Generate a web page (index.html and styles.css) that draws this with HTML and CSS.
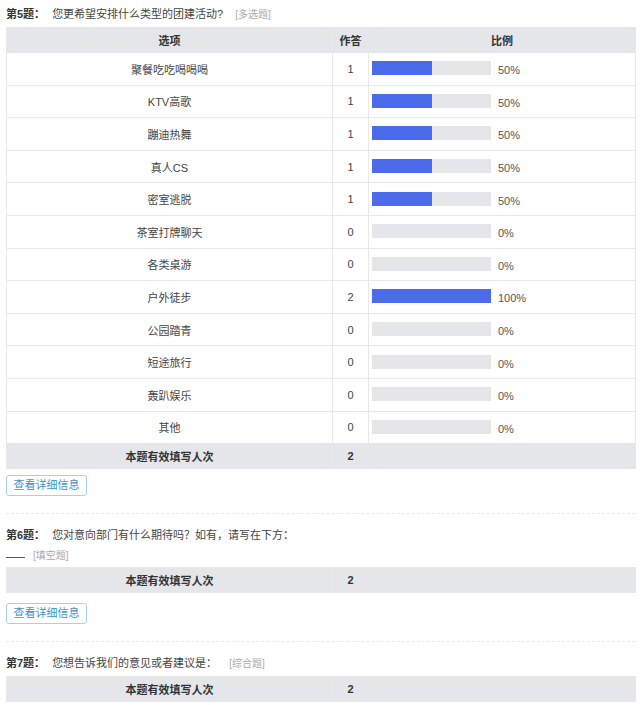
FILE: index.html
```html
<!DOCTYPE html>
<html lang="zh-CN">
<head>
<meta charset="utf-8">
<title>统计结果</title>
<link rel="stylesheet" href="styles.css">
</head>
<body>
<div class="page">
  <section class="q q-first">
    <div class="q-title"><span class="q-no">第5题：</span><span class="q-text">您更希望安排什么类型的团建活动?</span><span class="q-type">[多选题]</span></div>
    <table class="stat">
      <colgroup><col class="c1"><col class="c2"><col class="c3"></colgroup>
      <thead><tr><th>选项</th><th>作答</th><th>比例</th></tr></thead>
      <tbody>
        <tr><td>聚餐吃吃喝喝喝</td><td>1</td><td><div class="ratio"><div class="bar"><div class="fill" style="width:50%"></div></div><span class="pct">50%</span></div></td></tr>
        <tr><td>KTV高歌</td><td>1</td><td><div class="ratio"><div class="bar"><div class="fill" style="width:50%"></div></div><span class="pct">50%</span></div></td></tr>
        <tr><td>蹦迪热舞</td><td>1</td><td><div class="ratio"><div class="bar"><div class="fill" style="width:50%"></div></div><span class="pct">50%</span></div></td></tr>
        <tr><td>真人CS</td><td>1</td><td><div class="ratio"><div class="bar"><div class="fill" style="width:50%"></div></div><span class="pct">50%</span></div></td></tr>
        <tr><td>密室逃脱</td><td>1</td><td><div class="ratio"><div class="bar"><div class="fill" style="width:50%"></div></div><span class="pct">50%</span></div></td></tr>
        <tr><td>茶室打牌聊天</td><td>0</td><td><div class="ratio"><div class="bar"><div class="fill" style="width:0%"></div></div><span class="pct">0%</span></div></td></tr>
        <tr><td>各类桌游</td><td>0</td><td><div class="ratio"><div class="bar"><div class="fill" style="width:0%"></div></div><span class="pct">0%</span></div></td></tr>
        <tr><td>户外徒步</td><td>2</td><td><div class="ratio"><div class="bar"><div class="fill" style="width:100%"></div></div><span class="pct">100%</span></div></td></tr>
        <tr><td>公园踏青</td><td>0</td><td><div class="ratio"><div class="bar"><div class="fill" style="width:0%"></div></div><span class="pct">0%</span></div></td></tr>
        <tr><td>短途旅行</td><td>0</td><td><div class="ratio"><div class="bar"><div class="fill" style="width:0%"></div></div><span class="pct">0%</span></div></td></tr>
        <tr><td>轰趴娱乐</td><td>0</td><td><div class="ratio"><div class="bar"><div class="fill" style="width:0%"></div></div><span class="pct">0%</span></div></td></tr>
        <tr><td>其他</td><td>0</td><td><div class="ratio"><div class="bar"><div class="fill" style="width:0%"></div></div><span class="pct">0%</span></div></td></tr>
      </tbody>
      <tfoot><tr><td>本题有效填写人次</td><td>2</td><td></td></tr></tfoot>
    </table>
    <button class="detail-btn">查看详细信息</button>
  </section>

  <section class="q">
    <div class="q-title"><span class="q-no">第6题：</span><span class="q-text">您对意向部门有什么期待吗？如有，请写在下方：</span></div>
    <div class="q-blank"><span class="blank"></span><span class="q-type">[填空题]</span></div>
    <table class="stat stat-compact">
      <colgroup><col class="c1"><col class="c2"><col class="c3"></colgroup>
      <tfoot><tr><td>本题有效填写人次</td><td>2</td><td></td></tr></tfoot>
    </table>
    <button class="detail-btn detail-btn-loose">查看详细信息</button>
  </section>

  <section class="q q-last">
    <div class="q-title"><span class="q-no">第7题：</span><span class="q-text">您想告诉我们的意见或者建议是：</span><span class="q-type">[综合题]</span></div>
    <table class="stat">
      <colgroup><col class="c1"><col class="c2"><col class="c3"></colgroup>
      <tfoot><tr><td>本题有效填写人次</td><td>2</td><td></td></tr></tfoot>
    </table>
  </section>
</div>
</body>
</html>
```

FILE: styles.css
```css
* { box-sizing: border-box; }
html, body { margin: 0; padding: 0; background: #fff; }
body {
  font-family: "Liberation Sans", "Noto Sans CJK SC", sans-serif;
  font-size: 11px;
  color: #333;
}
.page { padding: 0 5px 0 6px; }

.q {
  padding: 11px 0 17px;
  border-bottom: 1px dashed #e9e9e9;
}
.q-first { padding-top: 4px; }
.q-last { border-bottom: none; padding-bottom: 0; }

.q-title {
  display: flex;
  align-items: baseline;
  height: 20px;
  line-height: 20px;
  margin-bottom: 3px;
  color: #444;
}
.q-no { color: #333; font-weight: bold; margin-right: 7px; }
.q-text { color: #444; }
.q-type { color: #aaa; font-size: 10px; margin-left: 12px; }

.q-blank {
  display: flex;
  align-items: center;
  height: 18px;
  margin: -3px 0 4px;
}
.q-blank .blank {
  display: inline-block;
  width: 19px;
  height: 8px;
  border-bottom: 1px solid #555;
  margin-right: 8px;
}
.q-blank .q-type { margin-left: 0; }

.stat {
  width: 629px;
  border-collapse: collapse;
  table-layout: fixed;
  border: 1px solid #e8e8e8;
}
.stat .c1 { width: 326px; }
.stat .c2 { width: 36px; }
.stat .c3 { width: 267px; }

.stat th, .stat td {
  padding: 0;
  text-align: center;
  vertical-align: middle;
  border: 1px solid #e8e8e8;
  font-weight: normal;
  color: #444;
}
.stat thead th {
  height: 25px;
  background: #e4e6ea;
  font-weight: bold;
  color: #333;
}
.stat tbody td { height: 32.6px; }
.stat tfoot td {
  height: 25px;
  background: #e4e6ea;
  font-weight: bold;
  color: #333;
}

.ratio {
  display: flex;
  align-items: center;
  padding-left: 3px;
}
.bar {
  width: 119px;
  height: 14px;
  background: #e5e6e9;
  margin-top: -1px;
}
.fill { height: 100%; background: #4a6bea; }
.pct { margin-left: 7px; padding-top: 3px; color: #555; }

.detail-btn {
  display: block;
  margin-top: 6px;
  height: 21px;
  width: 81px;
  padding: 0;
  border: 1px solid #a9d1e6;
  border-radius: 3px;
  background: #fff;
  color: #3f8fc2;
  font-family: "Liberation Sans", "Noto Sans CJK SC", sans-serif;
  font-size: 11px;
  line-height: 19px;
}
.detail-btn-loose { margin-top: 10px; }
```
